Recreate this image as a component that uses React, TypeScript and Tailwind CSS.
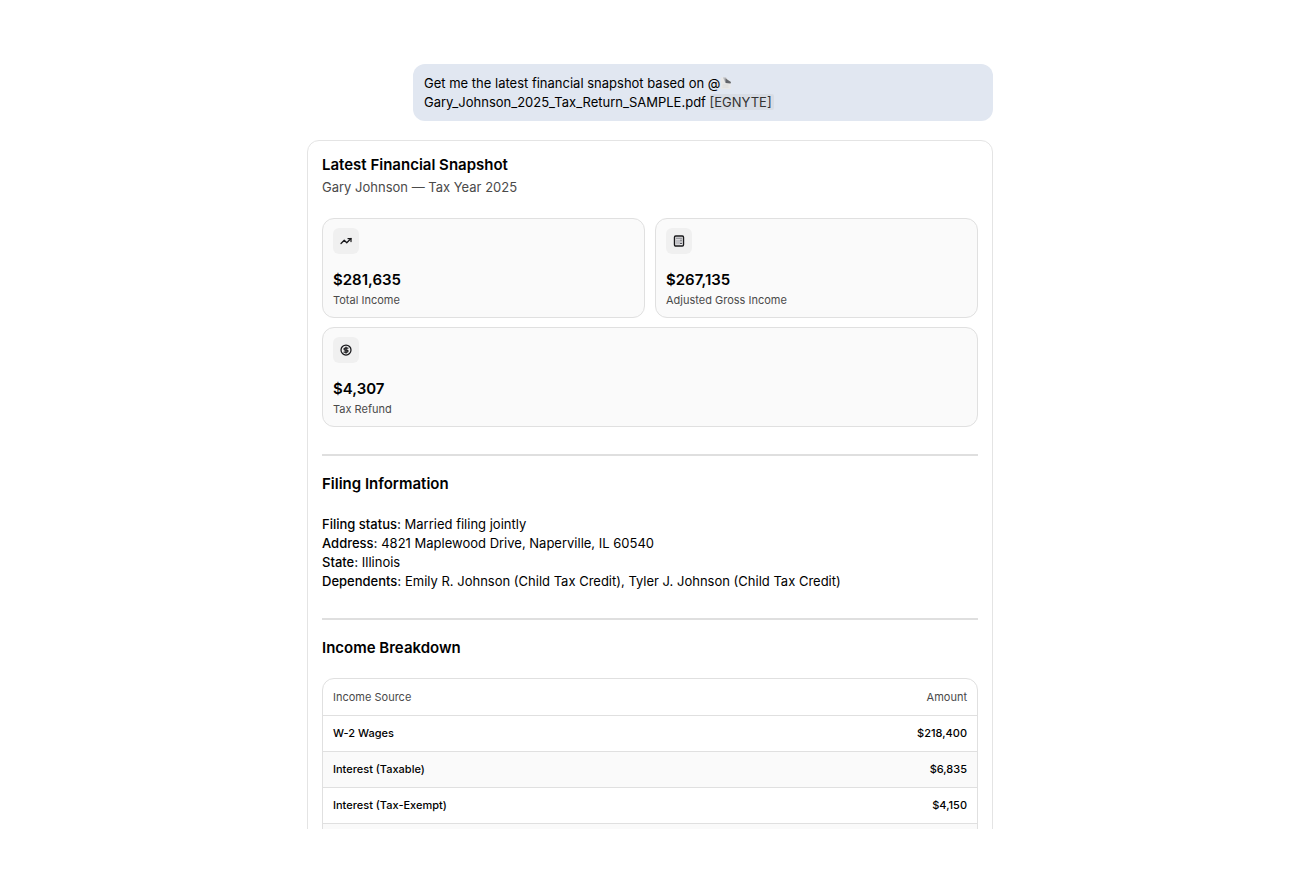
import { CircleDollarSign, TrendingUp } from "lucide-react";
import type { ReactNode } from "react";

const FILING_INFO = [
  { label: "Filing status", value: "Married filing jointly" },
  { label: "Address", value: "4821 Maplewood Drive, Naperville, IL 60540" },
  { label: "State", value: "Illinois" },
  {
    label: "Dependents",
    value: "Emily R. Johnson (Child Tax Credit), Tyler J. Johnson (Child Tax Credit)",
  },
];

const INCOME_ROWS = [
  { source: "W-2 Wages", amount: "$218,400" },
  { source: "Interest (Taxable)", amount: "$6,835" },
  { source: "Interest (Tax-Exempt)", amount: "$4,150" },
  { source: "", amount: "" },
];

function CalculatorIcon() {
  return (
    <svg width="12" height="12" viewBox="0 0 12 12" fill="none" aria-hidden="true">
      <rect x="1.5" y="1" width="9" height="10" rx="1.2" stroke="#18181b" strokeWidth="1.4" />
      <path d="M3 3.2h6" stroke="#71717a" strokeWidth="1" />
      <path d="M4 4.5v5M6 4.5v5" stroke="#a1a1aa" strokeWidth="1.2" />
      <path d="M8 4.5v2M7 8.4h2" stroke="#52525b" strokeWidth="1.2" />
    </svg>
  );
}

function FileIcon() {
  return (
    <svg className="inline-block align-[-1px]" width="12" height="12" viewBox="0 0 12 12" aria-hidden="true">
      <path d="M1 0.5h5L10.5 5V12H1z" fill="#e9e8e7" />
      <path d="M3 0.5h3L8 4 5 5z" fill="#b6b8bc" />
      <path d="M5.5 1.5L11 5 10.5 6.5 5.5 6z" fill="#63656a" />
      <path d="M2.5 8h6M2.5 10h6" stroke="#d8d8d8" strokeWidth="0.8" />
    </svg>
  );
}

interface StatCardProps {
  icon: ReactNode;
  value: string;
  label: string;
  className?: string;
}

function StatCard({ icon, value, label, className = "" }: StatCardProps) {
  return (
    <div className={`rounded-xl border border-[#e0e0e0] bg-[#fafafa] px-2.5 py-[9px] ${className}`}>
      <div className="flex size-[26px] items-center justify-center rounded-md bg-[#f0f0f0] text-zinc-900">
        {icon}
      </div>
      <p className="mt-4 text-[15px] leading-5 font-semibold">{value}</p>
      <p className="mt-0.5 text-[11px] leading-4 text-[#4a4a4a]">{label}</p>
    </div>
  );
}

export default function App() {
  return (
    <div className="flex h-screen flex-col bg-white px-6 pt-16 pb-[41px] font-['Inter',sans-serif] text-black">
      <main className="mx-auto flex min-h-0 w-full max-w-[686px] flex-1 flex-col overflow-hidden">
        <div className="w-full max-w-[580px] shrink-0 self-end rounded-xl bg-[#e1e7f1] px-[11px] pt-2.5 pb-[9px] text-[13px] leading-[19px]">
          <p>
            Get me the latest financial snapshot based on @<FileIcon />
            <br />
            Gary_Johnson_2025_Tax_Return_SAMPLE.pdf{" "}
            <span className="rounded-xs bg-[#d8dde5] pr-0.5 text-[#333]">[EGNYTE]</span>
          </p>
        </div>

        <article className="mt-[19px] shrink-0 rounded-xl border border-[#e4e4e4] p-3.5">
          <h1 className="text-[15px] leading-[19px] font-semibold">Latest Financial Snapshot</h1>
          <p className="mt-1 text-[13px] leading-[19px] text-[#4a4a4a]">Gary Johnson — Tax Year 2025</p>

          <div className="mt-[21px] grid grid-cols-2 gap-x-2.5 gap-y-[9px]">
            <StatCard
              icon={<TrendingUp size={12} strokeWidth={2.5} />}
              value="$281,635"
              label="Total Income"
            />
            <StatCard icon={<CalculatorIcon />} value="$267,135" label="Adjusted Gross Income" />
            <StatCard
              icon={<CircleDollarSign size={12} strokeWidth={2.5} />}
              value="$4,307"
              label="Tax Refund"
              className="col-span-2"
            />
          </div>

          <hr className="mt-[27px] border-t-2 border-[#dfdfdf]" />

          <section className="mt-[18px]">
            <h2 className="text-[15px] leading-[19px] font-semibold">Filing Information</h2>
            <dl className="mt-[22px] text-[13px] leading-[19px]">
              {FILING_INFO.map((item) => (
                <div key={item.label}>
                  <dt className="inline font-medium">{item.label}:</dt>{" "}
                  <dd className="inline">{item.value}</dd>
                </div>
              ))}
            </dl>
          </section>

          <hr className="mt-[27px] border-t-2 border-[#dfdfdf]" />

          <section className="mt-[18px]">
            <h2 className="text-[15px] leading-[19px] font-semibold">Income Breakdown</h2>
            <div className="mt-[21px] overflow-hidden rounded-xl border border-[#e0e0e0]">
              <table className="w-full text-[11px] leading-4">
                <thead>
                  <tr className="h-9 border-b border-[#e0e0e0] text-[#4a4a4a]">
                    <th className="px-2.5 text-left font-normal">Income Source</th>
                    <th className="px-2.5 text-right font-normal">Amount</th>
                  </tr>
                </thead>
                <tbody>
                  {INCOME_ROWS.map((row, i) => (
                    <tr key={i} className="h-9 border-b border-[#e0e0e0] even:bg-[#fafafa]">
                      <td className="px-2.5 font-medium">{row.source}</td>
                      <td className="px-2.5 text-right font-medium">{row.amount}</td>
                    </tr>
                  ))}
                </tbody>
              </table>
            </div>
          </section>
        </article>
      </main>
    </div>
  );
}
